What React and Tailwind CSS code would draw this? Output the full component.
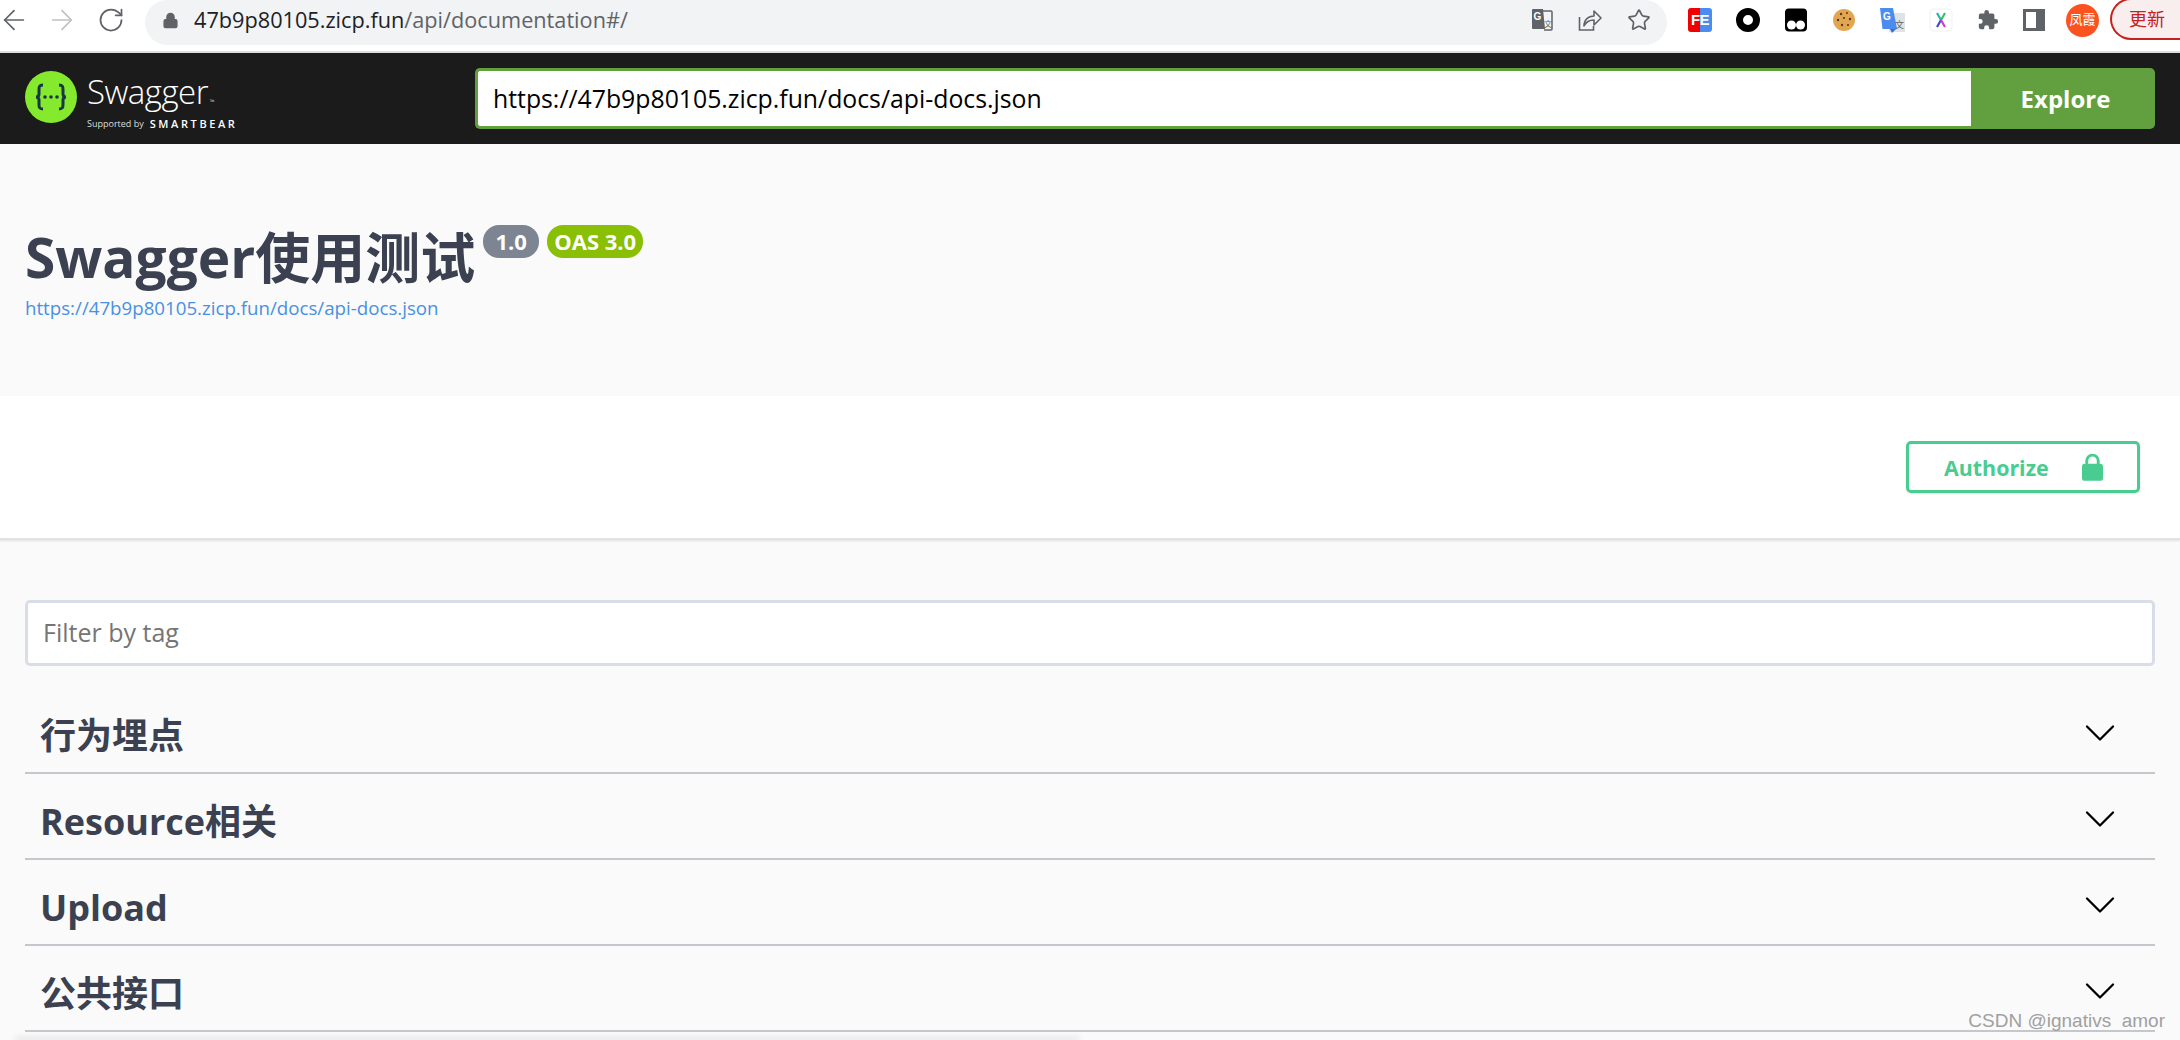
import { ArrowLeft, ArrowRight, RotateCw, Lock, Star, ChevronDown } from "lucide-react";

const FONT = "font-['Open_Sans','Noto_Sans_CJK_SC',sans-serif]";

function SwaggerLogo() {
  return (
    <svg width="52" height="52" viewBox="0 0 52 52" className="shrink-0 -translate-y-[2px]">
      <circle cx="26" cy="26" r="26" fill="#85ea2d" />
      <path
        d="M18 14c-4 0-4 2-4 5v4c0 2-1 3-3 3 2 0 3 1 3 3v4c0 3 0 5 4 5M34 14c4 0 4 2 4 5v4c0 2 1 3 3 3-2 0-3 1-3 3v4c0 3 0 5-4 5"
        fill="none"
        stroke="#173647"
        strokeWidth="3"
      />
      <circle cx="20" cy="26" r="1.8" fill="#173647" />
      <circle cx="26" cy="26" r="1.8" fill="#173647" />
      <circle cx="32" cy="26" r="1.8" fill="#173647" />
    </svg>
  );
}

function TranslateIcon() {
  return (
    <svg width="22" height="24" viewBox="0 0 22 24">
      <path d="M9 3h11a1 1 0 0 1 1 1v17a1 1 0 0 1-1 1h-7" fill="none" stroke="#5f6368" strokeWidth="1.5" />
      <path d="M2 1h10l2 20H2a1 1 0 0 1-1-1V2a1 1 0 0 1 1-1z" fill="#5f6368" />
      <text x="2.5" y="12" fontSize="10" fontWeight="700" fill="#fff" fontFamily="Liberation Sans, sans-serif">G</text>
      <text x="13" y="19" fontSize="8" fill="#5f6368" fontFamily="Noto Sans CJK SC, sans-serif">文</text>
    </svg>
  );
}

function ShareIcon() {
  return (
    <svg width="24" height="24" viewBox="0 0 24 24" fill="none" stroke="#5f6368" strokeWidth="1.6">
      <path d="M1.5 9v13h14v-4" />
      <path d="M6 18c0-6 4-10 10-10V3l7 7-7 7v-5c-5 0-8 2-10 6z" strokeLinejoin="round" />
    </svg>
  );
}

function FeIcon() {
  return (
    <div className="relative flex h-6 w-6 overflow-hidden rounded-[3px]">
      <div className="w-1/2 bg-[#f00000]" />
      <div className="w-1/2 bg-[#4a8cf0]" />
      <span className="absolute inset-0 flex items-center justify-center font-['Liberation_Sans',sans-serif] text-[15px] font-bold tracking-[-0.5px] text-white">
        FE
      </span>
    </div>
  );
}

function TampermonkeyIcon() {
  return (
    <svg width="24" height="24" viewBox="0 0 24 24">
      <rect x="1" y="0.5" width="22" height="23" rx="4" fill="#000" />
      <circle cx="7.5" cy="17" r="4.5" fill="#fff" />
      <circle cx="16.5" cy="17" r="4.5" fill="#fff" />
    </svg>
  );
}

function CookieIcon() {
  return (
    <svg width="24" height="24" viewBox="0 0 24 24">
      <circle cx="12" cy="12" r="11" fill="#e2a552" />
      <g fill="#5b3a1a">
        <circle cx="9" cy="6" r="1.2" />
        <circle cx="15" cy="5" r="1" />
        <circle cx="12" cy="10" r="1.1" />
        <circle cx="18" cy="11" r="1.2" />
        <circle cx="6" cy="12" r="1.2" />
        <circle cx="10" cy="17" r="1.2" />
        <circle cx="16" cy="17" r="1.1" />
      </g>
    </svg>
  );
}

function GoogleTranslateIcon() {
  return (
    <svg width="25" height="25" viewBox="0 0 25 25">
      <rect x="9" y="5" width="16" height="19" fill="#dfe3e6" />
      <path d="M1 0h13l4 21H3.5z" fill="#4a8cf0" transform="translate(-1 0)" />
      <path d="M10 21h6l-4 4z" fill="#3a6fd0" />
      <text x="3" y="12" fontSize="10" fontWeight="700" fill="#fff" fontFamily="Liberation Sans, sans-serif">G</text>
      <text x="15" y="20" fontSize="9" fill="#5f6368" fontFamily="Noto Sans CJK SC, sans-serif">文</text>
    </svg>
  );
}

function XIcon() {
  return (
    <svg width="24" height="24" viewBox="0 0 24 24" fill="none" strokeWidth="2.2">
      <rect x="1" y="1" width="22" height="22" rx="4" fill="#fff" stroke="#f1f1f1" strokeWidth="1" />
      <path d="M8 5l4 7" stroke="#23b5a5" />
      <path d="M16 5l-4 7" stroke="#36c06a" />
      <path d="M12 12l-4 7" stroke="#3a48d8" />
      <path d="M12 12l4 7" stroke="#d43bc0" />
    </svg>
  );
}

function PuzzleIcon() {
  return (
    <svg width="22" height="22" viewBox="0 0 24 24" fill="#5f6368">
      <path d="M20.5 11H19V7a2 2 0 0 0-2-2h-4V3.5a2.5 2.5 0 0 0-5 0V5H4a2 2 0 0 0-2 2v3.8h1.5a2.7 2.7 0 0 1 0 5.4H2V20a2 2 0 0 0 2 2h3.8v-1.5a2.7 2.7 0 0 1 5.4 0V22H17a2 2 0 0 0 2-2v-4h1.5a2.5 2.5 0 0 0 0-5z" />
    </svg>
  );
}

function BrowserBar() {
  return (
    <div className="flex h-[53px] items-start border-b-2 border-[#dddddd] bg-white">
      <div className="-ml-[2px] flex h-[40px] w-[147px] items-center text-[#5f6368]">
        <ArrowLeft size={32} strokeWidth={1.3} />
        <ArrowRight size={32} strokeWidth={1.3} className="ml-[16px] text-[#bfc1c4]" />
        <RotateCw size={28} strokeWidth={1.5} className="ml-[19px]" />
      </div>
      <div className="flex h-[45px] w-[1522px] items-center rounded-[24px] bg-[#f1f3f4] pb-[5px] pl-[17px] pr-[16px]">
        <Lock size={17} fill="#5f6368" className="mr-[15px] text-[#5f6368]" />
        <div className="text-[21.7px] text-[#5f6368]">
          <span className="text-[#202124]">47b9p80105.zicp.fun</span>/api/documentation#/
        </div>
        <div className="ml-auto flex items-center gap-[25px]">
          <TranslateIcon />
          <ShareIcon />
          <Star size={24} strokeWidth={1.7} className="text-[#5f6368]" />
        </div>
      </div>
      <div className="flex h-[40px] flex-1 items-center pl-[21px]">
        <div className="flex items-center gap-[24px]">
          <FeIcon />
          <div className="h-[24px] w-[24px] rounded-full border-[7px] border-black" />
          <TampermonkeyIcon />
          <CookieIcon />
          <GoogleTranslateIcon />
          <XIcon />
          <PuzzleIcon />
          <div className="flex h-[22px] w-[22px] border-[3px] border-r-[9px] border-[#5f6368]" />
        </div>
        <div className="ml-[21px] flex h-[33px] w-[33px] shrink-0 items-center justify-center rounded-full bg-[#fb5220] text-[13px] text-white">
          凤霞
        </div>
        <div className="ml-[11px] flex h-[42px] flex-1 -translate-y-[1px] items-center rounded-l-[21px] border-y-2 border-l-2 border-[#c5221f] bg-[#f9eeee] pl-[17px] text-[18px] text-[#c5221f]">
          更新
        </div>
      </div>
    </div>
  );
}

function Topbar() {
  return (
    <div className="flex h-[91px] items-center bg-[#1b1b1b] px-[25px]">
      <div className="flex w-[450px] items-center gap-[10px]">
        <SwaggerLogo />
        <div className="flex flex-col text-white">
          <div className="translate-y-[5px] text-[33px] leading-[40px] font-light tracking-[-0.5px]">
            Swagger<span className="ml-[2px] text-[6px]">™</span>
          </div>
          <div className="flex items-center gap-[6px] leading-[14px] text-[#dddddd]">
            <span className="text-[9px]">Supported by</span>
            <span className="text-[11px] font-semibold tracking-[2.6px] text-white">SMARTBEAR</span>
          </div>
        </div>
      </div>
      <div className="flex h-[61px] flex-1">
        <div className="flex flex-1 items-center rounded-l-[5px] border-[3px] border-r-0 border-[#62a03f] bg-white pl-[15px] text-[24.8px] text-black">
          https://47b9p80105.zicp.fun/docs/api-docs.json
        </div>
        <div className="flex w-[184px] items-center justify-center rounded-r-[5px] bg-[#62a03f] pl-[5px] text-[24px] font-bold text-white">
          Explore
        </div>
      </div>
    </div>
  );
}

function Info() {
  return (
    <div className="h-[252px] px-[25px] pt-[81px]">
      <div className="flex items-start text-[#3b4151]">
        <h1 className="text-[55px] leading-[64px] font-bold">Swagger使用测试</h1>
        <span className="ml-[8px] flex h-[33px] w-[56px] items-center justify-center rounded-[16px] bg-[#7d8492] text-[22px] font-bold text-white">
          1.0
        </span>
        <span className="ml-[8px] flex h-[33px] w-[96px] items-center justify-center rounded-[16px] bg-[#89bf04] text-[22px] font-bold text-white">
          OAS 3.0
        </span>
      </div>
      <a className="mt-[6px] block text-[18.7px] leading-[26px] text-[#4990e2]">
        https://47b9p80105.zicp.fun/docs/api-docs.json
      </a>
    </div>
  );
}

function SchemeBar() {
  return (
    <div className="flex h-[144px] items-start justify-end border-b-2 border-[#e2e2e2] bg-white pr-[40px] pt-[45px] shadow-[0_1px_2px_0_rgba(0,0,0,0.1)]">
      <button className="flex h-[52px] w-[234px] items-center justify-between rounded-[5px] border-[3px] border-[#49cc90] pl-[35px] pr-[34px] text-[21.4px] font-bold text-[#49cc90] shadow-[0_1px_2px_rgba(0,0,0,0.1)]">
        <span className="translate-y-[1px]">Authorize</span>
        <svg width="21" height="27" viewBox="0 0 22 28" fill="#49cc90">
          <path d="M5 12V7a6 6 0 0 1 12 0v5" fill="none" stroke="#49cc90" strokeWidth="3" />
          <rect x="0" y="10" width="22" height="18" rx="3" />
        </svg>
      </button>
    </div>
  );
}

function Section({ title }) {
  return (
    <div className="flex h-[86px] items-center justify-between border-b-2 border-[#c5c7cc] pl-[15px] pr-[29px] text-[36px] font-bold text-[#3b4151]">
      <span className="translate-y-[6px]">{title}</span>
      <ChevronDown size={52} strokeWidth={1.05} className="translate-y-[3px] text-black" />
    </div>
  );
}

export default function App() {
  const tags = ["行为埋点", "Resource相关", "Upload", "公共接口"];

  return (
    <div className={`relative h-[1040px] overflow-hidden bg-[#fafafa] ${FONT}`}>
      <BrowserBar />
      <Topbar />
      <Info />
      <SchemeBar />

      <div className="px-[25px] pt-[60px]">
        <div className="flex h-[66px] items-center rounded-[5px] border-[3px] border-[#d8dde7] bg-white pl-[15px] text-[25px] text-[#757575]">
          Filter by tag
        </div>
        <div className="mt-[22px]">
          {tags.map((t) => (
            <Section key={t} title={t} />
          ))}
        </div>
        <div className="mx-[-10px] mt-[8px] h-[2px] w-[1065px] bg-[#c8c8c8] shadow-[0_-2px_6px_rgba(0,0,0,0.2)]" />
      </div>

      <div className="absolute bottom-[5px] right-[15px] font-['Liberation_Sans',sans-serif] text-[19px] whitespace-pre text-[#a0a0a0]">
        CSDN @ignativs  amor
      </div>
    </div>
  );
}
